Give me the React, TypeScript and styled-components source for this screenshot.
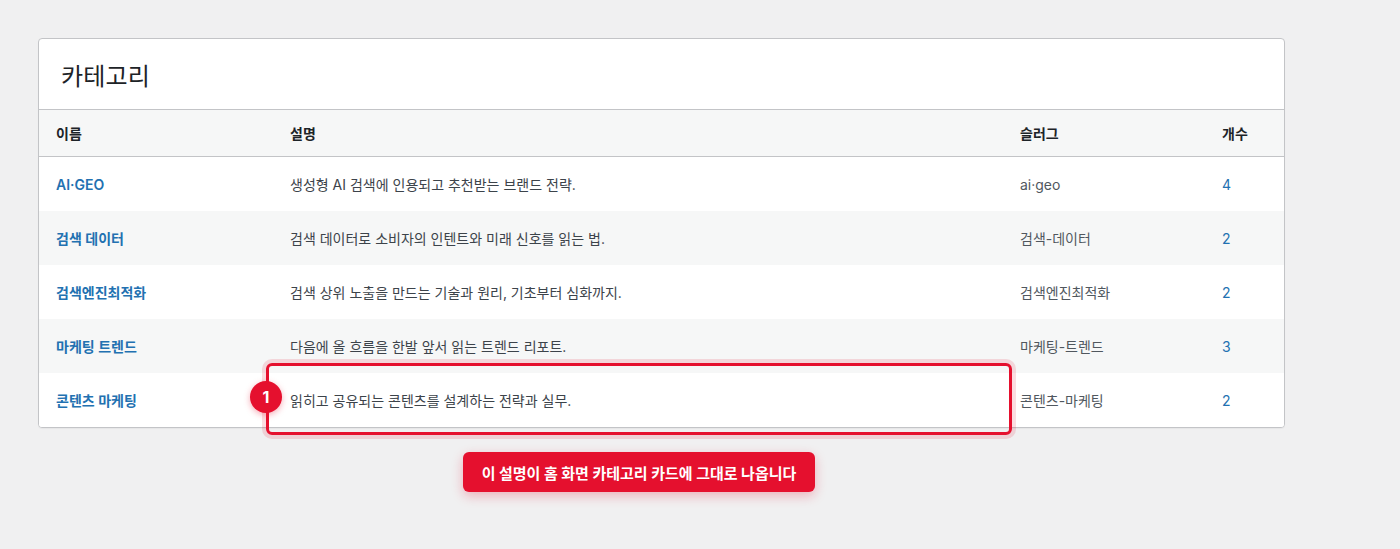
import React from "react";
import styled, { createGlobalStyle } from "styled-components";

const Global = createGlobalStyle`
  html, body { margin: 0; padding: 0; background: #f0f0f1; }
  body { font-family: Inter, "Noto Sans CJK KR", sans-serif; color: #3c434a; }
  * { box-sizing: border-box; }
`;

const Page = styled.div`
  position: relative;
  width: 1400px;
  height: 549px;
  padding: 38px 0 0 38px;
`;

const Card = styled.div`
  width: 1247px;
  background: #fff;
  border: 1px solid #c3c4c7;
  border-radius: 4px;
  box-shadow: 0 1px 1px rgba(0, 0, 0, 0.04);
  overflow: hidden;
`;

const CardHeader = styled.div`
  height: 71px;
  display: flex;
  align-items: center;
  padding-left: 22px;
  border-bottom: 1px solid #c3c4c7;
`;

const Title = styled.h2`
  margin: 0;
  font-size: 24px;
  font-weight: 400;
  color: #1d2327;
  letter-spacing: 0.2px;
`;

const cols = "234px 730px 202px 1fr";

const Row = styled.div<{ $alt?: boolean; $head?: boolean }>`
  display: grid;
  grid-template-columns: ${cols};
  align-items: center;
  height: ${(p) => (p.$head ? "47px" : "54px")};
  background: ${(p) => (p.$alt || p.$head ? "#f6f7f7" : "#fff")};
  border-bottom: ${(p) => (p.$head ? "1px solid #c3c4c7" : "none")};
`;

const HeadCell = styled.div`
  padding-left: 17px;
  font-size: 14px;
  font-weight: 600;
  color: #1d2327;
`;

const Cell = styled.div<{ $tone?: "name" | "count" | "desc" | "slug" }>`
  padding-left: 17px;
  font-size: 14px;
  font-weight: ${(p) => (p.$tone === "name" ? 600 : 400)};
  color: ${(p) =>
    p.$tone === "name" || p.$tone === "count"
      ? "#2271b1"
      : p.$tone === "slug"
      ? "#50575e"
      : "#3c434a"};
`;

const Highlight = styled.div`
  position: absolute;
  left: 266px;
  top: 363px;
  width: 746px;
  height: 72px;
  border: 3px solid #e5102e;
  border-radius: 6px;
  box-shadow: 0 0 0 4px rgba(229, 16, 46, 0.14);
  pointer-events: none;
`;

const Badge = styled.div`
  position: absolute;
  left: 250px;
  top: 381px;
  width: 32px;
  height: 32px;
  border-radius: 50%;
  background: #e5102e;
  color: #fff;
  font-size: 16px;
  font-weight: 700;
  display: flex;
  align-items: center;
  justify-content: center;
  box-shadow: 0 2px 6px rgba(229, 16, 46, 0.35);
`;

const Label = styled.div`
  position: absolute;
  left: 463px;
  top: 452px;
  width: 352px;
  height: 40px;
  border-radius: 6px;
  background: #e5102e;
  color: #fff;
  font-size: 15px;
  font-weight: 700;
  display: flex;
  align-items: center;
  justify-content: center;
  box-shadow: 0 4px 12px rgba(229, 16, 46, 0.28);
`;

const rows = [
  { name: "AI·GEO", desc: "생성형 AI 검색에 인용되고 추천받는 브랜드 전략.", slug: "ai·geo", count: 4 },
  { name: "검색 데이터", desc: "검색 데이터로 소비자의 인텐트와 미래 신호를 읽는 법.", slug: "검색-데이터", count: 2 },
  { name: "검색엔진최적화", desc: "검색 상위 노출을 만드는 기술과 원리, 기초부터 심화까지.", slug: "검색엔진최적화", count: 2 },
  { name: "마케팅 트렌드", desc: "다음에 올 흐름을 한발 앞서 읽는 트렌드 리포트.", slug: "마케팅-트렌드", count: 3 },
  { name: "콘텐츠 마케팅", desc: "읽히고 공유되는 콘텐츠를 설계하는 전략과 실무.", slug: "콘텐츠-마케팅", count: 2 },
];

export default function App() {
  return (
    <Page>
      <Global />
      <Card>
        <CardHeader>
          <Title>카테고리</Title>
        </CardHeader>
        <Row $head>
          <HeadCell>이름</HeadCell>
          <HeadCell>설명</HeadCell>
          <HeadCell>슬러그</HeadCell>
          <HeadCell>개수</HeadCell>
        </Row>
        {rows.map((r, i) => (
          <Row key={r.name} $alt={i % 2 === 1}>
            <Cell $tone="name">{r.name}</Cell>
            <Cell $tone="desc">{r.desc}</Cell>
            <Cell $tone="slug">{r.slug}</Cell>
            <Cell $tone="count">{r.count}</Cell>
          </Row>
        ))}
      </Card>
      <Highlight />
      <Badge>1</Badge>
      <Label>이 설명이 홈 화면 카테고리 카드에 그대로 나옵니다</Label>
    </Page>
  );
}
